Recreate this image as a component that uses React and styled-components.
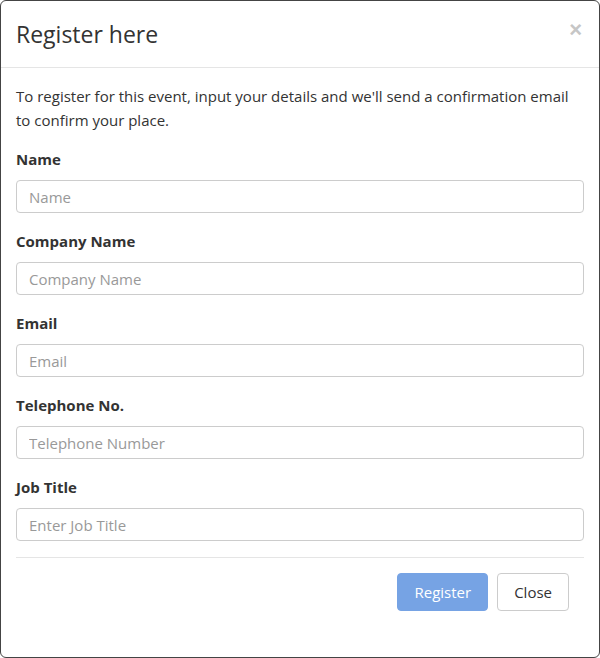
import styled, { createGlobalStyle } from "styled-components";

const Global = createGlobalStyle`
    * { box-sizing: border-box; }
    body {
        margin: 0;
        font-family: "Open Sans", "Noto Sans", sans-serif;
        color: #333;
        background: #fff;
    }
`;

// Modal box
const Modal = styled.div`
    width: 600px;
    height: 658px;
    border: 1px solid #444;
    border-radius: 6px;
    background: #fff;
    display: flex;
    flex-direction: column;
`;

const Header = styled.div`
    height: 67px;
    border-bottom: 1px solid #e5e5e5;
    display: flex;
    justify-content: space-between;
    align-items: center;
    padding: 0 17px 0 15px;
`;

const Title = styled.h4`
    margin: 0;
    font-size: 23px;
    font-weight: 500;
    color: #333;
`;

const CloseX = styled.button`
    border: none;
    background: none;
    padding: 0;
    margin-top: -9px;
    font-size: 22px;
    font-weight: 700;
    color: #c6c6c6;
    font-family: "Liberation Sans", sans-serif;
    cursor: pointer;
`;

const Body = styled.div`
    padding: 16px 15px 0 15px;
`;

const Intro = styled.p`
    margin: 0 0 17px;
    font-size: 15px;
    line-height: 24px;
`;

const Group = styled.div`
    display: flex;
    flex-direction: column;
    margin-bottom: 18px;
`;

const Label = styled.label`
    font-size: 15px;
    font-weight: 700;
    line-height: 21px;
    margin-bottom: 10px;
`;

const Input = styled.input`
    height: 33px;
    border: 1px solid #ccc;
    border-radius: 4px;
    padding: 0 12px;
    font-family: inherit;
    font-size: 15px;
    color: #555;
    &::placeholder { color: #999; }
`;

const Footer = styled.div`
    margin: -2px 15px 0;
    border-top: 1px solid #e5e5e5;
    padding: 15px 15px 0 0;
    display: flex;
    justify-content: flex-end;
    gap: 9px;
`;

const Button = styled.button`
    height: 38px;
    padding: 0 16px;
    border-radius: 4px;
    font-family: inherit;
    font-size: 15px;
    border: 1px solid ${(p) => (p.$primary ? "#76a3e4" : "#ccc")};
    background: ${(p) => (p.$primary ? "#76a3e4" : "#fff")};
    color: ${(p) => (p.$primary ? "#fff" : "#333")};
    cursor: pointer;
`;

const fields = [
    ["Name", "Name"],
    ["Company Name", "Company Name"],
    ["Email", "Email"],
    ["Telephone No.", "Telephone Number"],
    ["Job Title", "Enter Job Title"],
];

export default function App() {
    return (
        <>
            <Global />
            <Modal>
                <Header>
                    <Title>Register here</Title>
                    <CloseX>×</CloseX>
                </Header>
                <Body>
                    <Intro>
                        To register for this event, input your details and we'll send a confirmation email to confirm your place.
                    </Intro>
                    {fields.map(([label, ph]) => (
                        <Group key={label}>
                            <Label>{label}</Label>
                            <Input placeholder={ph} />
                        </Group>
                    ))}
                </Body>
                <Footer>
                    <Button $primary>Register</Button>
                    <Button>Close</Button>
                </Footer>
            </Modal>
        </>
    );
}
